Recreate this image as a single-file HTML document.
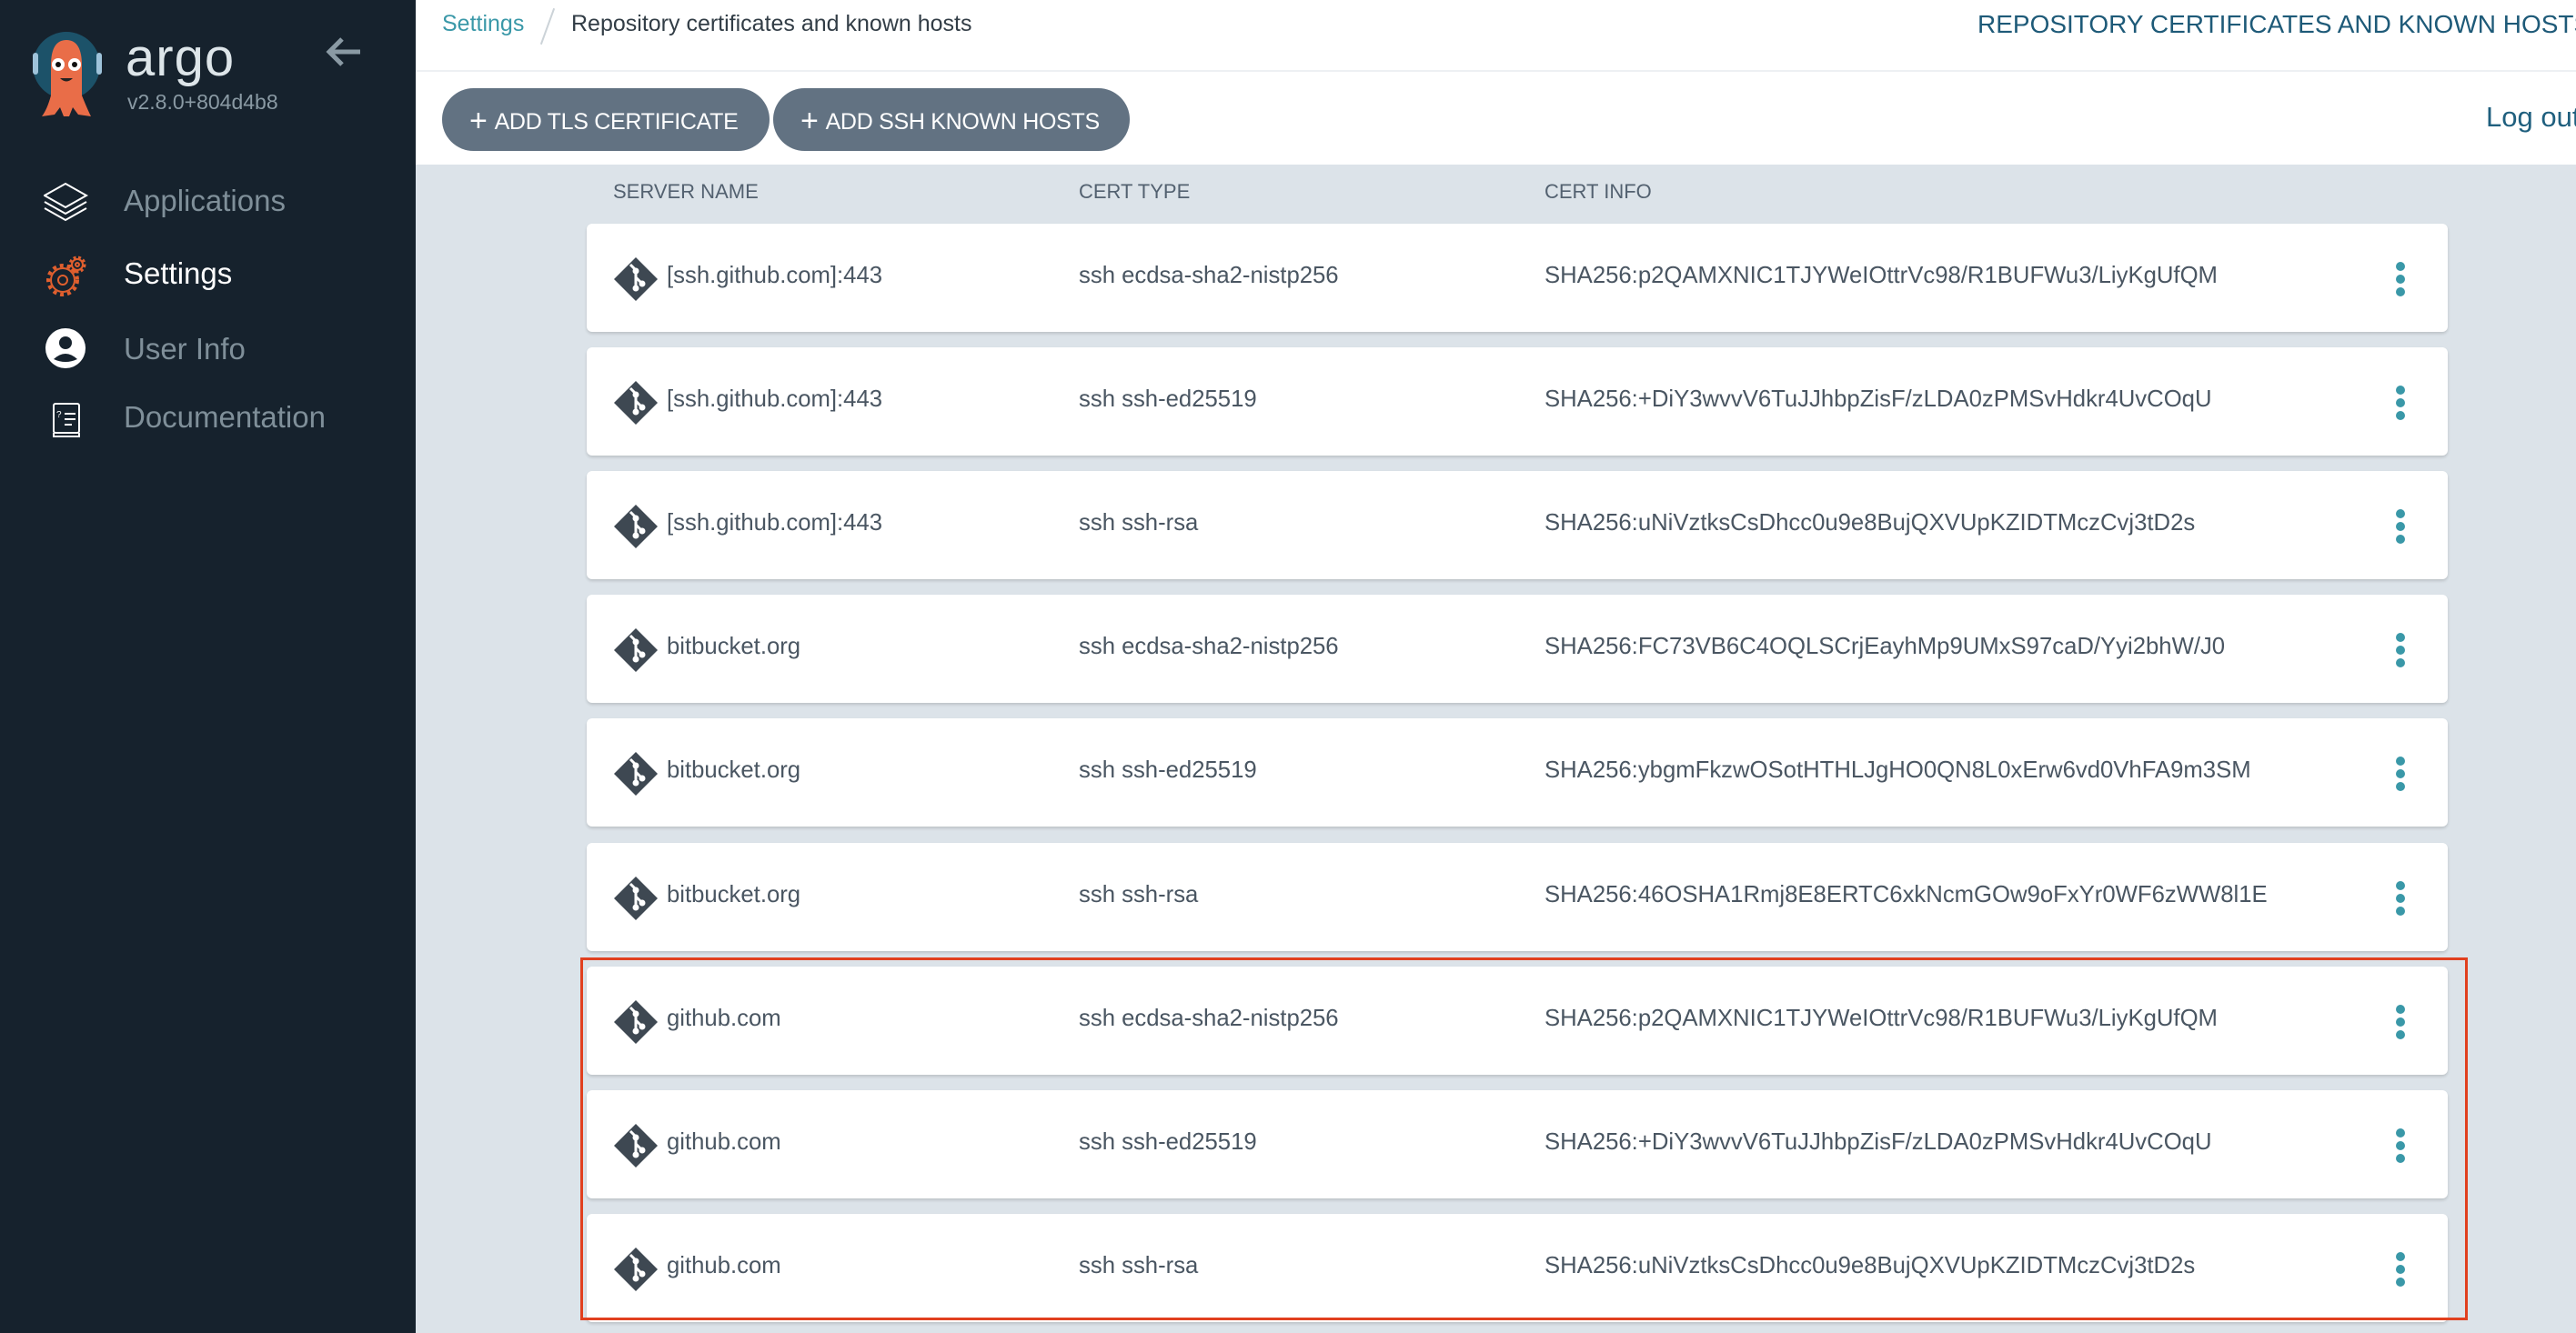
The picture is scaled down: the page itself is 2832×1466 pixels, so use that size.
<!DOCTYPE html>
<html><head><meta charset="utf-8"><style>
*{box-sizing:border-box;margin:0;padding:0}
body{width:2832px;height:1466px;overflow:hidden;font-family:"Liberation Sans",sans-serif;background:#dce3e9;position:relative}
.side{position:absolute;left:0;top:0;width:457px;height:1466px;background:#16222d}
.top{position:absolute;left:457px;top:0;right:0;height:79px;background:#fff;border-bottom:2px solid #edf0f3}
.tool{position:absolute;left:457px;top:79px;right:0;height:102px;background:#fff}
.btn{position:absolute;top:97px;height:69px;border-radius:35px;background:#627282;color:#fff;font-size:25px;line-height:69px;padding-left:30px;letter-spacing:-0.3px}
.btn b{font-weight:normal;font-size:34px;position:relative;top:2px;margin-right:8px}
.hdr{position:absolute;top:198px;font-size:22px;color:#536170}
.card{position:absolute;left:645px;width:2046px;height:119px;background:#fff;border-radius:6px;box-shadow:0 2px 3px rgba(0,0,0,.15)}
.card span{position:absolute;top:43px;font-size:25.7px;color:#4a5662;white-space:nowrap}
.card svg.g{position:absolute;left:30px;top:37px}
.dots{position:absolute;left:1989px;top:42px;width:10px}
.dots i{display:block;width:10px;height:10px;border-radius:5px;background:#3a98a8;margin-bottom:4px}
.nav{position:absolute;left:136px;font-size:33px;color:#7f8f99}
</style></head><body>
<div class="side">
 <svg style="position:absolute;left:34px;top:30px" width="82" height="102" viewBox="0 0 82 102">
  <circle cx="39" cy="42" r="37" fill="#1c5269"/>
  <rect x="2" y="28" width="6" height="24" rx="3" fill="#9ec3da"/><rect x="72" y="28" width="6" height="24" rx="3" fill="#9ec3da"/>
  <path d="M22 42 Q22 14 39 14 Q56 14 56 42 L56 75 Q62 90 66 98 L52 96 L46 88 L42 98 L36 98 L32 88 L26 96 L12 98 Q18 90 22 75 Z" fill="#e96d48"/>
  <circle cx="30" cy="41" r="7" fill="#fff"/><circle cx="48" cy="41" r="7" fill="#fff"/>
  <circle cx="30" cy="41" r="3" fill="#111"/><circle cx="48" cy="41" r="3" fill="#111"/>
  <path d="M32 56 Q39 63 46 56 Z" fill="#222"/>
 </svg>
 <div style="position:absolute;left:138px;top:30px;font-size:58px;color:#dde5e9;letter-spacing:1px">argo</div>
 <div style="position:absolute;left:140px;top:99px;font-size:23px;color:#8a9aa4">v2.8.0+804d4b8</div>
 <svg style="position:absolute;left:358px;top:40px" width="40" height="34" viewBox="0 0 40 34"><path d="M38 17H5M18 3L4 17L18 31" stroke="#8a9aa4" stroke-width="5" fill="none"/></svg>
 <svg style="position:absolute;left:48px;top:200px" width="50" height="50" viewBox="0 0 50 50" fill="none" stroke="#fff" stroke-width="2"><path d="M24 2L47 15L24 28L1 15Z"/><path d="M1 22L24 35L47 22"/><path d="M1 29L24 42L47 29"/></svg>
 <div class="nav" style="top:202px">Applications</div>
 <svg style="position:absolute;left:49px;top:281px" width="48" height="46" viewBox="0 0 48 46" fill="none" stroke="#e05f2e" stroke-width="2">
  <circle cx="20" cy="27" r="16" stroke-width="4" stroke-dasharray="4 4"/><circle cx="20" cy="27" r="13"/><circle cx="20" cy="27" r="5"/>
  <circle cx="36" cy="10" r="8" stroke-width="3" stroke-dasharray="3 2.5"/><circle cx="36" cy="10" r="6"/><circle cx="36" cy="10" r="2"/></svg>
 <div class="nav" style="top:282px;color:#fff">Settings</div>
 <svg style="position:absolute;left:50px;top:361px" width="44" height="44" viewBox="0 0 44 44"><circle cx="22" cy="22" r="22" fill="#fff"/><circle cx="22" cy="16" r="7" fill="#16222d"/><path d="M9 34Q22 22 35 34Q22 40 9 34Z" fill="#16222d"/></svg>
 <div class="nav" style="top:365px">User Info</div>
 <svg style="position:absolute;left:57px;top:443px" width="32" height="40" viewBox="0 0 32 40" fill="none" stroke="#fff" stroke-width="2"><rect x="2" y="1" width="28" height="32" rx="2"/><path d="M2 33v4h28v-4M14 12h12M14 18h12M14 24h8"/><text x="5" y="16" font-size="10" fill="#fff" stroke="none">?</text></svg>
 <div class="nav" style="top:440px">Documentation</div>
</div>
<div class="top">
 <div style="position:absolute;left:29px;top:12px;font-size:25px;color:#3a98a8">Settings</div>
 <div style="position:absolute;left:144px;top:8px;width:2px;height:42px;background:#ccd3d8;transform:rotate(20deg)"></div>
 <div style="position:absolute;left:171px;top:12px;font-size:25px;color:#323d46">Repository certificates and known hosts</div>
 <div style="position:absolute;left:1717px;top:11px;font-size:28px;color:#1e5a78;white-space:nowrap">REPOSITORY CERTIFICATES AND KNOWN HOSTS</div>
</div>
<div class="tool"><div style="position:absolute;left:2276px;top:32px;font-size:31px;color:#1f5f7e;white-space:nowrap">Log out</div></div>
<div class="btn" style="left:486px;width:360px"><b>+</b>ADD TLS CERTIFICATE</div>
<div class="btn" style="left:850px;width:392px"><b>+</b>ADD SSH KNOWN HOSTS</div>
<div class="hdr" style="left:674px">SERVER NAME</div>
<div class="hdr" style="left:1186px">CERT TYPE</div>
<div class="hdr" style="left:1698px">CERT INFO</div>
<div id="rows"></div>
<div style="position:absolute;left:638px;top:1053px;width:2075px;height:399px;border:3px solid #e1401f"></div>
<script>
var d=[["[ssh.github.com]:443","ssh ecdsa-sha2-nistp256","SHA256:p2QAMXNIC1TJYWeIOttrVc98/R1BUFWu3/LiyKgUfQM"],
["[ssh.github.com]:443","ssh ssh-ed25519","SHA256:+DiY3wvvV6TuJJhbpZisF/zLDA0zPMSvHdkr4UvCOqU"],
["[ssh.github.com]:443","ssh ssh-rsa","SHA256:uNiVztksCsDhcc0u9e8BujQXVUpKZIDTMczCvj3tD2s"],
["bitbucket.org","ssh ecdsa-sha2-nistp256","SHA256:FC73VB6C4OQLSCrjEayhMp9UMxS97caD/Yyi2bhW/J0"],
["bitbucket.org","ssh ssh-ed25519","SHA256:ybgmFkzwOSotHTHLJgHO0QN8L0xErw6vd0VhFA9m3SM"],
["bitbucket.org","ssh ssh-rsa","SHA256:46OSHA1Rmj8E8ERTC6xkNcmGOw9oFxYr0WF6zWW8l1E"],
["github.com","ssh ecdsa-sha2-nistp256","SHA256:p2QAMXNIC1TJYWeIOttrVc98/R1BUFWu3/LiyKgUfQM"],
["github.com","ssh ssh-ed25519","SHA256:+DiY3wvvV6TuJJhbpZisF/zLDA0zPMSvHdkr4UvCOqU"],
["github.com","ssh ssh-rsa","SHA256:uNiVztksCsDhcc0u9e8BujQXVUpKZIDTMczCvj3tD2s"]];
var h="";d.forEach(function(r,i){var t=246+Math.round(i*136.1);
h+='<div class="card" style="top:'+t+'px"><svg class="g" width="48" height="48" viewBox="0 0 48 48"><path d="M24 0L48 24L24 48L0 24Z" fill="#3e4852"/><path d="M18 8L24 14M24 14V34M24 22L31 29" stroke="#fff" stroke-width="3" fill="none"/><circle cx="24" cy="15" r="3.5" fill="#fff"/><circle cx="24" cy="34" r="3.5" fill="#fff"/><circle cx="31" cy="29" r="3.5" fill="#fff"/></svg><span style="left:88px">'+r[0]+'</span><span style="left:541px">'+r[1]+'</span><span style="left:1053px">'+r[2]+'</span><div class="dots"><i></i><i></i><i></i></div></div>';});
document.getElementById("rows").innerHTML=h;
</script>
</body></html>
